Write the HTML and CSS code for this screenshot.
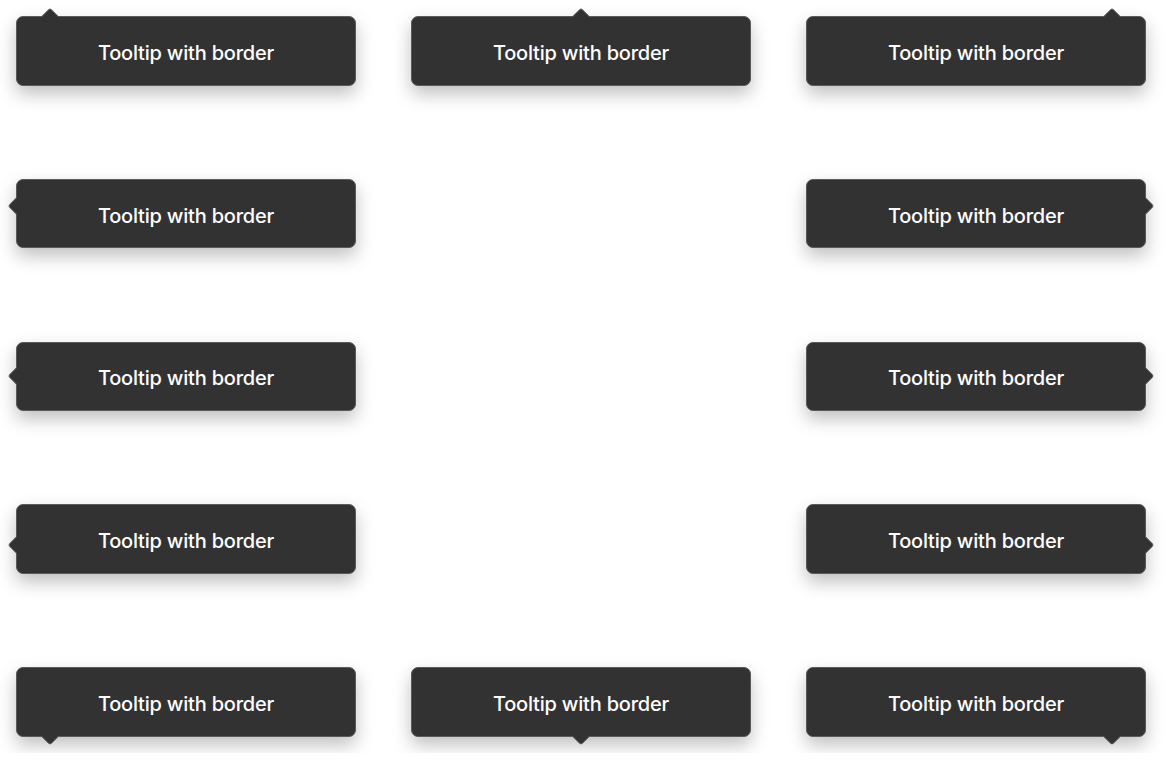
FILE: index.html
```html
<!DOCTYPE html>
<html>
<head>
<meta charset="utf-8">
<link rel="stylesheet" href="styles.css">
</head>
<body>
<div class="grid">
  <div class="tip arrow-top-start">Tooltip with border</div>
  <div class="tip arrow-top-center">Tooltip with border</div>
  <div class="tip arrow-top-end">Tooltip with border</div>

  <div class="tip arrow-left-start">Tooltip with border</div>
  <div class="empty"></div>
  <div class="tip arrow-right-start">Tooltip with border</div>

  <div class="tip arrow-left-center">Tooltip with border</div>
  <div class="empty"></div>
  <div class="tip arrow-right-center">Tooltip with border</div>

  <div class="tip arrow-left-end">Tooltip with border</div>
  <div class="empty"></div>
  <div class="tip arrow-right-end">Tooltip with border</div>

  <div class="tip arrow-bottom-start">Tooltip with border</div>
  <div class="tip arrow-bottom-center">Tooltip with border</div>
  <div class="tip arrow-bottom-end">Tooltip with border</div>
</div>
</body>
</html>
```

FILE: styles.css
```css
html, body {
  margin: 0;
  padding: 0;
  background: #ffffff;
}
body {
  font-family: Inter, "Liberation Sans", sans-serif;
}
.grid {
  padding: 16px;
  display: grid;
  grid-template-columns: repeat(3, 340px);
  grid-auto-rows: 69.5px;
  column-gap: 55px;
  row-gap: 93.25px;
}
.tip {
  position: relative;
  box-sizing: border-box;
  background: #323232;
  border: 1px solid #5a5a5a;
  border-radius: 7px;
  color: #ffffff;
  font-size: 20px;
  font-weight: 450;
  letter-spacing: -0.2px;
  display: flex;
  align-items: center;
  justify-content: center;
  padding-top: 4px;
  box-shadow: 0 8px 18px rgba(0, 0, 0, 0.25);
}
.tip::before {
  content: "";
  position: absolute;
  width: 12px;
  height: 12px;
  box-sizing: border-box;
  background: #323232;
  border-top: 1px solid #5a5a5a;
  border-left: 1px solid #5a5a5a;
  border-top-left-radius: 3px;
}
/* top */
.arrow-top-start::before,
.arrow-top-center::before,
.arrow-top-end::before {
  top: -7px;
  transform: rotate(45deg);
}
.arrow-top-start::before { left: 27px; }
.arrow-top-center::before { left: calc(50% - 6px); }
.arrow-top-end::before { right: 27px; }
/* bottom */
.arrow-bottom-start::before,
.arrow-bottom-center::before,
.arrow-bottom-end::before {
  bottom: -7px;
  transform: rotate(225deg);
}
.arrow-bottom-start::before { left: 27px; }
.arrow-bottom-center::before { left: calc(50% - 6px); }
.arrow-bottom-end::before { right: 27px; }
/* left */
.arrow-left-start::before,
.arrow-left-center::before,
.arrow-left-end::before {
  left: -7px;
  transform: rotate(-45deg);
}
.arrow-left-start::before { top: 20px; }
.arrow-left-center::before { top: calc(50% - 6px); }
.arrow-left-end::before { bottom: 22px; }
/* right */
.arrow-right-start::before,
.arrow-right-center::before,
.arrow-right-end::before {
  right: -7px;
  transform: rotate(135deg);
}
.arrow-right-start::before { top: 20px; }
.arrow-right-center::before { top: calc(50% - 6px); }
.arrow-right-end::before { bottom: 22px; }
```
